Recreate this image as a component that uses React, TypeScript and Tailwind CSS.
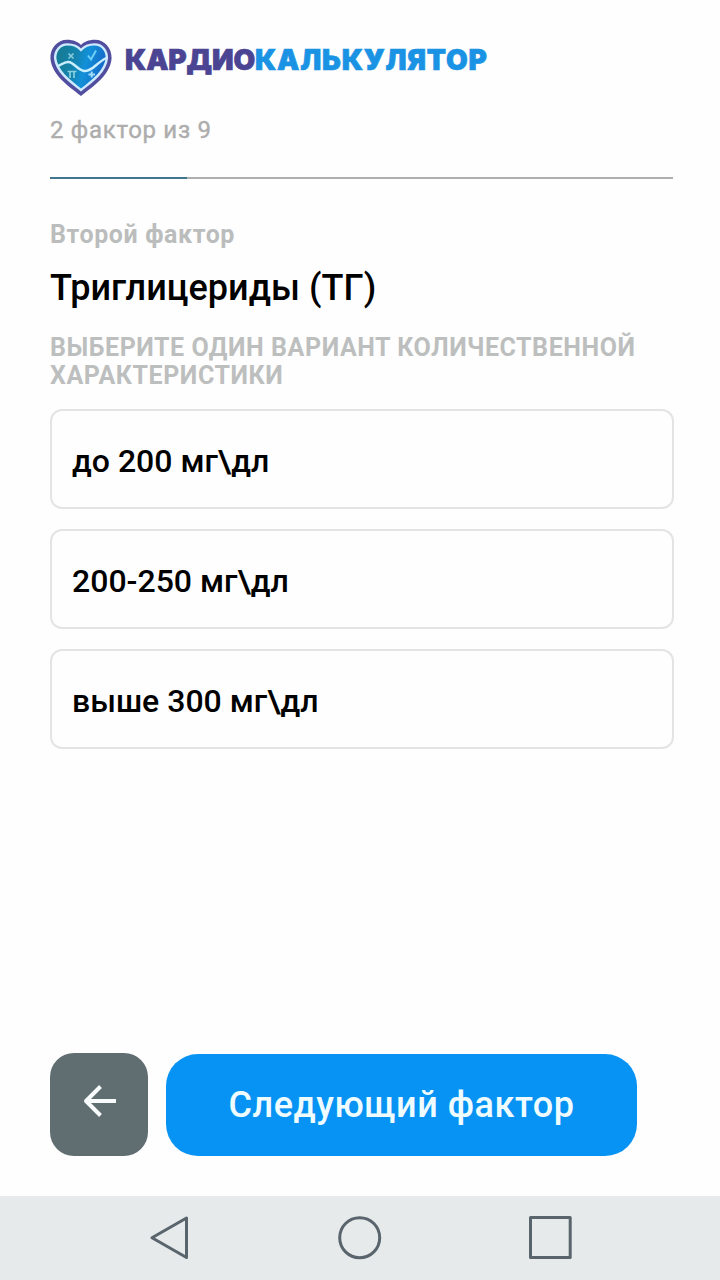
import React, { useState } from 'react';

const TOTAL_FACTORS = 9;

const options = [
  { id: 1, label: 'до 200 мг\\дл' },
  { id: 2, label: '200-250 мг\\дл' },
  { id: 3, label: 'выше 300 мг\\дл' },
];

const HeartLogo: React.FC = () => (
  <svg width="62" height="58" viewBox="0 0 62 58" fill="none" className="shrink-0">
    <defs>
      <linearGradient id="heart" x1="8" y1="18" x2="54" y2="30" gradientUnits="userSpaceOnUse">
        <stop offset="0" stopColor="#157c96" />
        <stop offset="0.35" stopColor="#1483ad" />
        <stop offset="0.6" stopColor="#1290d8" />
        <stop offset="1" stopColor="#1668c8" />
      </linearGradient>
    </defs>
    <path
      d="M31 57C23 50 2 38 .4 19.500C0 9 7.500 .8 17 .8C23.500 .8 28 3 31 6C34 3 38.500 .8 45 .8C54.500 .8 62 9 61.600 19.500C60 38 39 50 31 57Z"
      fill="#524e9f"
    />
    <path
      d="M31 51C24 45 7 34.500 5.200 19.500C4.800 11.500 10 5.400 17.500 5.400C23.500 5.400 28 7.500 31 11C34 7.500 38.500 5.400 44.500 5.400C52 5.400 57.200 11.500 56.800 19.500C55 34.500 38 45 31 51Z"
      fill="url(#heart)"
      stroke="#cdeaff"
      strokeWidth="2.400"
    />
    <path
      d="M7 27.500C11 26.500 14 22.500 18.500 23C24 23.500 27 30.500 34 32C42 33 47 23 56.500 19"
      stroke="#c9efff"
      strokeWidth="2.400"
    />
    <path d="M18.500 14.500l5 5M23.500 14.500l-5 5" stroke="#86cbdc" strokeWidth="1.700" />
    <path d="M38 16.500l3 4l5-9" stroke="#6dcff8" strokeWidth="2" />
    <path d="M17.500 32.500h9M20 32.500v6.500M24 32.500v6.500" stroke="#86d0df" strokeWidth="1.700" />
    <path d="M38.500 35.500h6.500M41.700 32.500v6" stroke="#a5dcfa" strokeWidth="2" />
  </svg>
);

const NavigationBar: React.FC = () => (
  <nav className="flex h-[84px] shrink-0 items-center justify-between bg-[#e7eaea] pr-[147px] pl-[149px]">
    <svg width="42" height="46" viewBox="0 0 42 46" fill="none" stroke="#59646d" strokeWidth="3" strokeLinejoin="round">
      <path d="M37.500 3v39.500L3 22.700Z" />
    </svg>
    <svg width="46" height="46" viewBox="0 0 46 46" fill="none" stroke="#59646d" strokeWidth="3">
      <circle cx="23.700" cy="22.700" r="20" />
    </svg>
    <svg width="46" height="46" viewBox="0 0 46 46" fill="none" stroke="#59646d" strokeWidth="3" strokeLinejoin="round">
      <path d="M3.500 2.500h39.700v40H3.500Z" />
    </svg>
  </nav>
);

const App: React.FC = () => {
  const [step] = useState(2);
  const [selected, setSelected] = useState<number | null>(null);

  // the bar is filled up to the current factor
  const progress = (step / TOTAL_FACTORS) * 100 - 0.2;

  return (
    <div className="flex h-[1280px] w-[720px] flex-col bg-[#fefefe] font-['Roboto',sans-serif] text-black">
      <main className="flex flex-1 flex-col pr-[46px] pl-[50px]">
        <header className="flex items-start gap-[13px] pt-[39px]">
          <HeartLogo />
          <h1 className="font-['Inter',sans-serif] text-[28px] leading-[43px] font-black [-webkit-text-stroke:0.7px]">
            <span className="tracking-[-0.1px] text-[#4a4493]">КАРДИО</span>
            <span className="tracking-[0.8px] text-[#1b93e4]">КАЛЬКУЛЯТОР</span>
          </h1>
        </header>

        <p className="mt-[19px] text-[24px] leading-7 tracking-[0.7px] text-[#adadad] [-webkit-text-stroke:0.4px_#adadad]">
          {step} фактор из {TOTAL_FACTORS}
        </p>
        <div className="mt-[33px] mr-px h-0.5 bg-[#adafb0]">
          <div className="h-full bg-[#44758f]" style={{ width: `${progress}%` }} />
        </div>

        <h3 className="mt-[42px] text-[25px] leading-7 font-bold tracking-[0.6px] text-[#bbbdbd]">Второй фактор</h3>
        <h2 className="mt-[18px] text-[36px] leading-[42px] font-medium tracking-[0.05px]">Триглицериды (ТГ)</h2>
        <p className="mt-[25px] text-[25px] leading-7 font-bold tracking-[0.56px] text-[#bdbfbf] uppercase">
          Выберите один вариант количественной характеристики
        </p>

        <div className="mt-[19px] flex flex-col gap-5">
          {options.map((option) => (
            <button
              key={option.id}
              onClick={() => setSelected(option.id)}
              aria-pressed={selected === option.id}
              className="flex h-[100px] items-center rounded-xl border-2 border-[#e4e4e4] px-5 pt-1 text-left text-[32px] font-medium"
            >
              {option.label}
            </button>
          ))}
        </div>

        <div className="mt-auto mb-10 flex items-end gap-[18px]">
          <button className="flex h-[103px] w-[98px] items-center justify-center rounded-[24px] bg-[#616e71] pb-2 pl-0.5">
            <svg width="36" height="36" viewBox="0 0 36 36" fill="none" stroke="#f7fbfb" strokeWidth="4" strokeLinejoin="round">
              <path d="M34 18H4M18.500 3.500L4 18L18.500 32.500" />
            </svg>
          </button>
          <button className="h-[102px] w-[471px] rounded-[32px] bg-[#0793f4] text-[36px] leading-[100px] font-medium tracking-[0.55px] text-[#eefcff]">
            Следующий фактор
          </button>
        </div>
      </main>
      <NavigationBar />
    </div>
  );
};

export default App;
